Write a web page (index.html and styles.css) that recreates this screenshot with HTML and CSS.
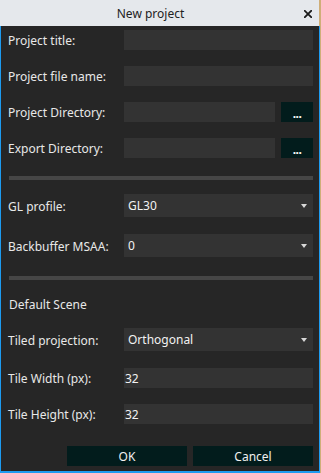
FILE: index.html
```html
<!DOCTYPE html>
<html lang="en">
<head>
    <meta charset="UTF-8">
    <meta name="viewport" content="width=device-width, initial-scale=1.0">
    <title>New project</title>
    <link rel="stylesheet" href="styles.css">
</head>
<body>
    <div class="window">
        <div class="titlebar">
            <span class="title">New project</span>
            <span class="close">
                <svg width="8" height="8" viewBox="0 0 8 8">
                    <path d="M0.8 0.8 L7.2 7.2 M7.2 0.8 L0.8 7.2" stroke="#1a1a1a" stroke-width="1.8" stroke-linecap="square"/>
                </svg>
            </span>
        </div>
        <div class="content">
            <div class="row">
                <label>Project title:</label>
                <div class="field"></div>
            </div>
            <div class="row">
                <label>Project file name:</label>
                <div class="field"></div>
            </div>
            <div class="row">
                <label>Project Directory:</label>
                <div class="field"></div>
                <div class="browse">...</div>
            </div>
            <div class="row">
                <label>Export Directory:</label>
                <div class="field"></div>
                <div class="browse">...</div>
            </div>
            <div class="separator sep-1"></div>
            <div class="row combo-row gl-row">
                <label>GL profile:</label>
                <div class="combo"><span>GL30</span><i class="arrow"></i></div>
            </div>
            <div class="row combo-row msaa-row">
                <label>Backbuffer MSAA:</label>
                <div class="combo"><span>0</span><i class="arrow"></i></div>
            </div>
            <div class="separator sep-2"></div>
            <div class="section">Default Scene</div>
            <div class="row combo-row">
                <label>Tiled projection:</label>
                <div class="combo"><span>Orthogonal</span><i class="arrow"></i></div>
            </div>
            <div class="row tile-width">
                <label>Tile Width (px):</label>
                <div class="field">32</div>
            </div>
            <div class="row">
                <label>Tile Height (px):</label>
                <div class="field">32</div>
            </div>
            <div class="buttons">
                <div class="button">OK</div>
                <div class="button">Cancel</div>
            </div>
        </div>
    </div>
</body>
</html>
```

FILE: styles.css
```css
body {
    margin: 0;
    padding: 0;
    background-color: #cfae78;
    font-family: "Noto Sans", "Open Sans", sans-serif;
    font-size: 12px;
    height: 473px;
    overflow: hidden;
}
.window {
    width: 320px;
    height: 473px;
    display: flex;
    flex-direction: column;
}
.titlebar {
    height: 26px;
    background-color: #e5e8ec;
    color: #222;
    display: flex;
    align-items: center;
    position: relative;
    width: 319px;
}
.title {
    flex: 1;
    text-align: center;
    padding-right: 18px;
}
.close {
    position: absolute;
    right: 7px;
    top: 10px;
    width: 8px;
    height: 8px;
    display: flex;
}
.content {
    flex: 1;
    background-color: #262626;
    color: #e8e8e8;
    border-left: 1px solid #1d9bf0;
    border-right: 1px solid #1d9bf0;
    border-bottom: 2px solid #1d9bf0;
    padding: 4px 6px 0 7px;
    display: flex;
    flex-direction: column;
    gap: 16px;
}
.row {
    display: flex;
    align-items: center;
    height: 20px;
}
.row label {
    width: 116px;
    flex-shrink: 0;
    padding-top: 1px;
}
.field {
    flex: 1;
    height: 20px;
    background-color: #333333;
    color: #f2f2f2;
    line-height: 21px;
    padding-left: 1px;
}
.browse {
    width: 32px;
    height: 20px;
    margin-left: 6px;
    background-color: #021c1c;
    color: #fff;
    font-weight: bold;
    text-align: center;
    line-height: 24px;
    font-size: 12px;
    letter-spacing: -0.5px;
}
.separator {
    height: 4px;
    margin-left: 1px;
    background-color: #464646;
}
.sep-1 {
    margin-top: 2px;
    margin-bottom: -2px;
}
.sep-2 {
    margin-top: 3px;
    margin-bottom: -2px;
}
.combo-row {
    height: 23px;
}
.msaa-row {
    margin-top: 1px;
}
.combo {
    flex: 1;
    height: 23px;
    background-color: #333333;
    color: #f2f2f2;
    display: flex;
    align-items: center;
    justify-content: space-between;
    padding: 0 6px 0 4px;
}
.arrow {
    width: 0;
    height: 0;
    border-left: 3px solid transparent;
    border-right: 3px solid transparent;
    border-top: 4px solid #d8d8d8;
}
.section {
    height: 18px;
    line-height: 22px;
    margin-left: 1px;
}
.tile-width {
    margin-top: 1px;
}
.buttons {
    display: flex;
    justify-content: flex-end;
    gap: 6px;
    margin-top: 6px;
}
.button {
    width: 120px;
    height: 20px;
    background-color: #021c1c;
    color: #f0f0f0;
    text-align: center;
    line-height: 21px;
}
```
